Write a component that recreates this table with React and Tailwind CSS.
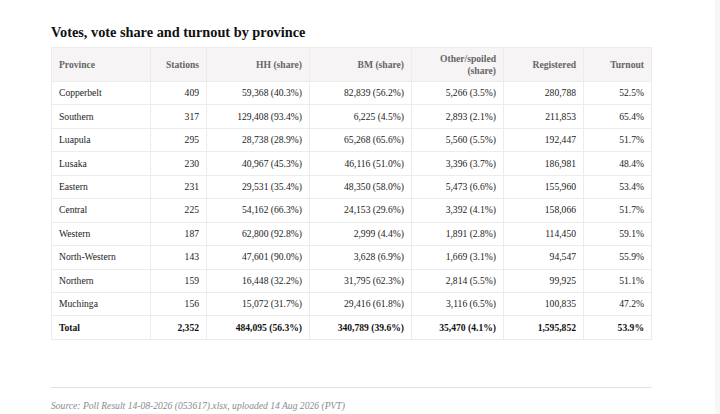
const rows = [
  ["Copperbelt", "409", "59,368 (40.3%)", "82,839 (56.2%)", "5,266 (3.5%)", "280,788", "52.5%"],
  ["Southern", "317", "129,408 (93.4%)", "6,225 (4.5%)", "2,893 (2.1%)", "211,853", "65.4%"],
  ["Luapula", "295", "28,738 (28.9%)", "65,268 (65.6%)", "5,560 (5.5%)", "192,447", "51.7%"],
  ["Lusaka", "230", "40,967 (45.3%)", "46,116 (51.0%)", "3,396 (3.7%)", "186,981", "48.4%"],
  ["Eastern", "231", "29,531 (35.4%)", "48,350 (58.0%)", "5,473 (6.6%)", "155,960", "53.4%"],
  ["Central", "225", "54,162 (66.3%)", "24,153 (29.6%)", "3,392 (4.1%)", "158,066", "51.7%"],
  ["Western", "187", "62,800 (92.8%)", "2,999 (4.4%)", "1,891 (2.8%)", "114,450", "59.1%"],
  ["North-Western", "143", "47,601 (90.0%)", "3,628 (6.9%)", "1,669 (3.1%)", "94,547", "55.9%"],
  ["Northern", "159", "16,448 (32.2%)", "31,795 (62.3%)", "2,814 (5.5%)", "99,925", "51.1%"],
  ["Muchinga", "156", "15,072 (31.7%)", "29,416 (61.8%)", "3,116 (6.5%)", "100,835", "47.2%"],
];

const total = ["Total", "2,352", "484,095 (56.3%)", "340,789 (39.6%)", "35,470 (4.1%)", "1,595,852", "53.9%"];

const widths = ["w-[99px]", "w-[56px]", "w-[103px]", "w-[102px]", "w-[92px]", "w-[80px]", "w-[68px]"];

export default function App() {
  return (
    <div
      className="flex w-[720px] h-[414px] bg-white overflow-hidden"
      style={{ fontFamily: '"Liberation Serif", "Times New Roman", serif' }}
    >
      <div className="flex-1 pl-[51px] pt-[24px]">
        {/* Title */}
        <h1 className="text-[14.3px] leading-[16px] font-bold text-[#111] mb-[7px]">
          Votes, vote share and turnout by province
        </h1>

        {/* Table */}
        <table className="w-[600px] table-fixed border-collapse text-[9.6px] text-[#222]">
          <thead>
            <tr className="h-[34px] bg-[#f6f4f4]">
              {["Province", "Stations", "HH (share)", "BM (share)", "Other/spoiled (share)", "Registered", "Turnout"].map((h, i) => (
                <th
                  key={h}
                  className={`${widths[i]} border border-[#ececec] px-[7px] font-bold text-[#666] leading-[12px] ${
                    i === 0 ? "text-left" : "text-right"
                  }`}
                >
                  {h === "Other/spoiled (share)" ? (
                    <>
                      Other/spoiled
                      <br />
                      (share)
                    </>
                  ) : (
                    h
                  )}
                </th>
              ))}
            </tr>
          </thead>
          <tbody>
            {rows.map((r) => (
              <tr key={r[0]} className="h-[23.45px]">
                {r.map((c, i) => (
                  <td
                    key={i}
                    className={`border border-[#ececec] px-[7px] leading-[12px] ${i === 0 ? "text-left" : "text-right"}`}
                  >
                    {c}
                  </td>
                ))}
              </tr>
            ))}
            <tr className="h-[23.45px] font-bold text-[#111]">
              {total.map((c, i) => (
                <td
                  key={i}
                  className={`border border-[#ececec] px-[7px] leading-[12px] ${i === 0 ? "text-left" : "text-right"}`}
                >
                  {c}
                </td>
              ))}
            </tr>
          </tbody>
        </table>

        {/* Footer */}
        <div className="w-[601px] mt-[47px] border-t border-[#e2e2e2] pt-[12px]">
          <p className="text-[9.6px] italic text-[#8a8a8a] leading-[12px]">
            Source: Poll Result 14-08-2026 (053617).xlsx, uploaded 14 Aug 2026 (PVT)
          </p>
        </div>
      </div>

      {/* Scrollbar track */}
      <div className="w-[5px] h-full bg-[#f6f6f6]" />
    </div>
  );
}
